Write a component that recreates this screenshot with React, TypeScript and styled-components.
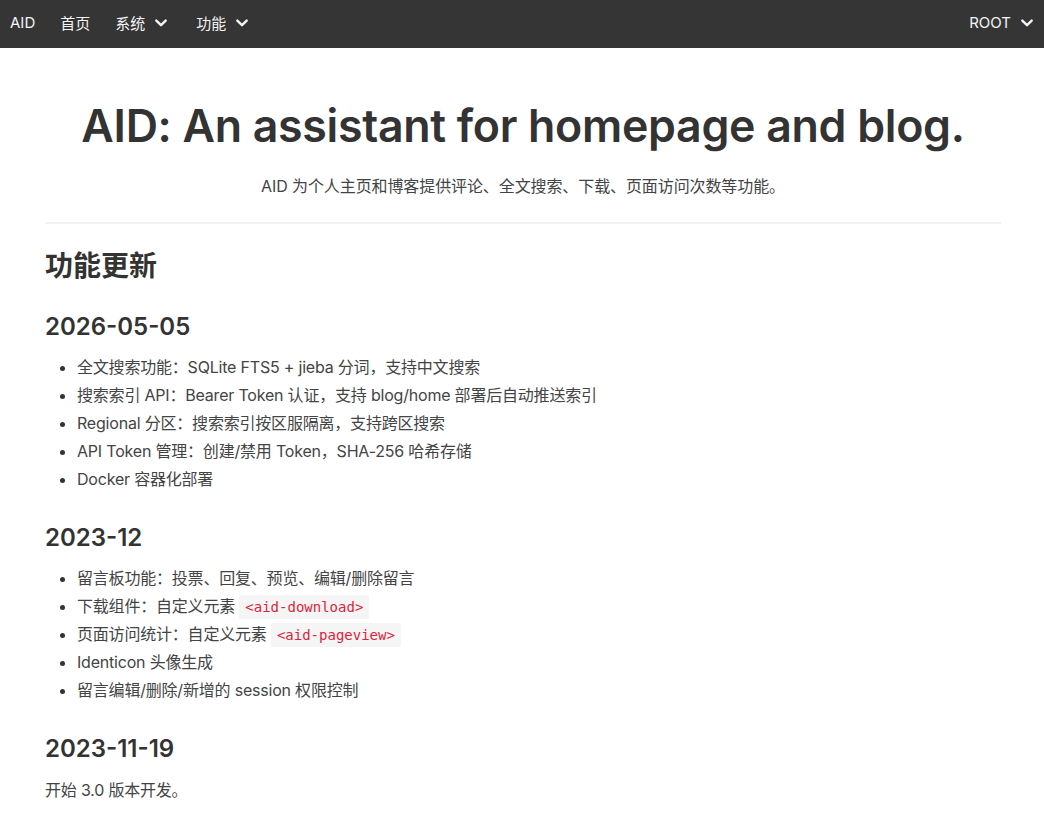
import React from "react";
import styled, { createGlobalStyle } from "styled-components";

const GlobalStyle = createGlobalStyle`
    html, body {
        margin: 0;
        padding: 0;
        background: #fff;
    }
    body {
        font-family: Inter, "Noto Sans CJK SC", sans-serif;
        color: #373737;
        font-size: 16px;
    }
`;

const Chevron: React.FC = () => (
    <svg width="14" height="14" viewBox="0 0 14 14" aria-hidden>
        <path
            d="M2.3 4.6 L7 9.2 L11.7 4.6"
            fill="none"
            stroke="currentColor"
            strokeWidth="2.4"
            strokeLinecap="round"
            strokeLinejoin="round"
        />
    </svg>
);

const App: React.FC = () => {
    const updates = [
        {
            date: "2026-05-05",
            items: [
                <>全文搜索功能：SQLite FTS5 + jieba 分词，支持中文搜索</>,
                <>搜索索引 API：Bearer Token 认证，支持 blog/home 部署后自动推送索引</>,
                <>Regional 分区：搜索索引按区服隔离，支持跨区搜索</>,
                <>API Token 管理：创建/禁用 Token，SHA-256 哈希存储</>,
                <>Docker 容器化部署</>,
            ],
        },
        {
            date: "2023-12",
            items: [
                <>留言板功能：投票、回复、预览、编辑/删除留言</>,
                <>
                    下载组件：自定义元素 <Code>&lt;aid-download&gt;</Code>
                </>,
                <>
                    页面访问统计：自定义元素 <Code>&lt;aid-pageview&gt;</Code>
                </>,
                <>Identicon 头像生成</>,
                <>留言编辑/删除/新增的 session 权限控制</>,
            ],
        },
    ];

    return (
        <>
            <GlobalStyle />
            <NavBar>
                <NavGroup>
                    <NavItem>AID</NavItem>
                    <NavItem>首页</NavItem>
                    <NavItem>
                        系统 <Chevron />
                    </NavItem>
                    <NavItem>
                        功能 <Chevron />
                    </NavItem>
                </NavGroup>
                <NavGroup>
                    <NavItem>
                        ROOT <Chevron />
                    </NavItem>
                </NavGroup>
            </NavBar>
            <Main>
                <Hero>
                    <Title>AID: An assistant for homepage and blog.</Title>
                    <Lead>AID 为个人主页和博客提供评论、全文搜索、下载、页面访问次数等功能。</Lead>
                </Hero>
                <Divider />
                <SectionTitle>功能更新</SectionTitle>
                {updates.map((u) => (
                    <React.Fragment key={u.date}>
                        <DateTitle>{u.date}</DateTitle>
                        <List>
                            {u.items.map((item, i) => (
                                <li key={i}>{item}</li>
                            ))}
                        </List>
                    </React.Fragment>
                ))}
                <DateTitle>2023-11-19</DateTitle>
                <Paragraph>开始 3.0 版本开发。</Paragraph>
            </Main>
        </>
    );
};

export default App;

// Styled Components
const NavBar = styled.nav`
    box-sizing: border-box;
    height: 48px;
    background-color: #353535;
    display: flex;
    align-items: center;
    justify-content: space-between;
    padding: 0 7px 3px 10px;
    color: #f4f4f4;
    font-size: 15px;
`;

const NavGroup = styled.div`
    display: flex;
    align-items: center;
    gap: 25px;
`;

const NavItem = styled.span`
    display: flex;
    align-items: center;
    gap: 9px;
    cursor: pointer;

    svg {
        margin: 1px 3px 0 0;
    }
`;

const Main = styled.main`
    margin: 0 43px 0 45px;
`;

const Hero = styled.header`
    text-align: center;
    padding-top: 49px;
`;

const Title = styled.h1`
    margin: 0;
    font-size: 44.7px;
    font-weight: 600;
    line-height: 58px;
    letter-spacing: -0.3px;
    color: #333;
`;

const Lead = styled.p`
    margin: 20px 0 0;
    font-size: 16px;
    line-height: 22px;
    letter-spacing: -0.1px;
    color: #444;
`;

const Divider = styled.hr`
    margin: 25px 0 0;
    border: none;
    height: 2px;
    background: #f1f1f1;
`;

const SectionTitle = styled.h2`
    margin: 23px 0 0;
    font-size: 28px;
    font-weight: 600;
    line-height: 38px;
    color: #333;
`;

const DateTitle = styled.h3`
    margin: 25px 0 0;
    font-size: 24px;
    font-weight: 600;
    line-height: 34px;
    color: #333;
`;

const List = styled.ul`
    margin: 9px 0 0;
    padding: 0 0 3px 32px;
    font-size: 16px;
    line-height: 28px;
    letter-spacing: -0.2px;
    color: #444;

    li::marker {
        color: #333;
    }
`;

const Code = styled.code`
    font-family: "DejaVu Sans Mono", "Liberation Mono", monospace;
    font-size: 14px;
    line-height: 1;
    letter-spacing: 0;
    color: #e01e3c;
    background: #f5f5f5;
    padding: 4px 6px;
    border-radius: 2px;
`;

const Paragraph = styled.p`
    margin: 10px 0 0;
    font-size: 16px;
    line-height: 28px;
    letter-spacing: -0.2px;
    color: #444;
`;
